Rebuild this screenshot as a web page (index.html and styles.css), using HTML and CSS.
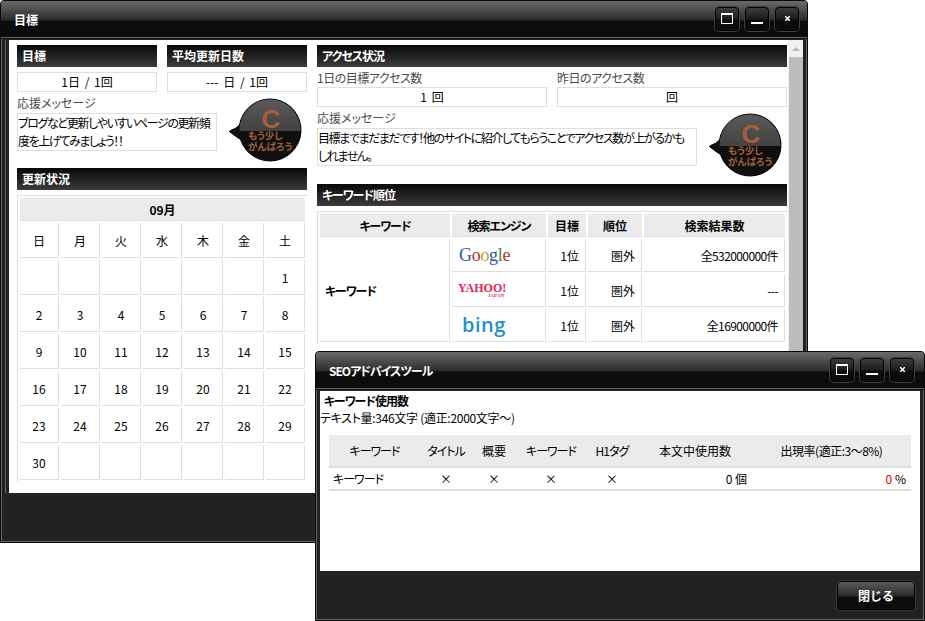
FILE: index.html
```html
<!DOCTYPE html>
<html lang="ja">
<head>
  <meta charset="UTF-8" />
  <meta name="viewport" content="width=device-width, initial-scale=1.0" />
  <title>目標</title>
  <link rel="stylesheet" href="styles.css">
</head>
<body>
  <div class="window window-goal">
    <div class="titlebar">
      <span class="titlebar-text">目標</span>
      <div class="window-buttons">
        <button class="win-btn"><span class="icon-max"></span></button>
        <button class="win-btn"><span class="icon-min"></span></button>
        <button class="win-btn"><svg class="icon-close" viewBox="0 0 5 5" width="5" height="5"><path d="M0 0L5 5M5 0L0 5" /></svg></button>
      </div>
    </div>
    <div class="goal-frame">
      <div class="goal-content">
        <div class="col-left">
          <div class="two-col">
            <div class="cell-140">
              <h2 class="section-head">目標</h2>
              <div class="value-box value-first">1日 / 1回</div>
            </div>
            <div class="cell-140">
              <h2 class="section-head">平均更新日数</h2>
              <div class="value-box value-first">--- 日 / 1回</div>
            </div>
          </div>

          <div class="cheer">
            <div class="cheer-left">
              <div class="label">応援メッセージ</div>
              <div class="message message-short">ブログなど更新しやいすいページの更新頻<br>度を上げてみましょう！！</div>
            </div>
            <svg class="bubble" viewBox="0 0 74 64" width="74" height="64">
              <defs>
                <linearGradient id="bubbleTop" x1="0" y1="0" x2="0" y2="1">
                  <stop offset="0" stop-color="#5a5a5a" />
                  <stop offset="1" stop-color="#2c2c2c" />
                </linearGradient>
                <clipPath id="bubbleUpper"><rect x="0" y="0" width="74" height="33" /></clipPath>
              </defs>
              <path d="M41 1a31 31 0 1 1-29.5 40.5Q6 38 1 34q-1-1 .5-1.500Q7 31 10.500 27A31 31 0 0 1 41 1z" fill="#0f0f0f" stroke="#000" />
              <circle cx="41" cy="32" r="30.500" fill="url(#bubbleTop)" clip-path="url(#bubbleUpper)" />
              <text class="bubble-c" x="42" y="30" text-anchor="middle">C</text>
              <text class="bubble-text" x="19" y="41">もう少し</text>
              <text class="bubble-text" x="19" y="52">がんばろう</text>
            </svg>
          </div>

          <h2 class="section-head head-calendar">更新状況</h2>
          <table class="grid-table calendar">
            <tr><th class="month" colspan="7">09月</th></tr>
            <tr><td>日</td><td>月</td><td>火</td><td>水</td><td>木</td><td>金</td><td>土</td></tr>
            <tr><td></td><td></td><td></td><td></td><td></td><td></td><td>1</td></tr>
            <tr><td>2</td><td>3</td><td>4</td><td>5</td><td>6</td><td>7</td><td>8</td></tr>
            <tr><td>9</td><td>10</td><td>11</td><td>12</td><td>13</td><td>14</td><td>15</td></tr>
            <tr><td>16</td><td>17</td><td>18</td><td>19</td><td>20</td><td>21</td><td>22</td></tr>
            <tr><td>23</td><td>24</td><td>25</td><td>26</td><td>27</td><td>28</td><td>29</td></tr>
            <tr><td>30</td><td></td><td></td><td></td><td></td><td></td><td></td></tr>
          </table>
        </div>

        <div class="col-right">
          <h2 class="section-head tight">アクセス状況</h2>
          <div class="two-col">
            <div class="cell-230">
              <div class="label label-access">1日の目標アクセス数</div>
              <div class="value-box">1 回</div>
            </div>
            <div class="cell-230">
              <div class="label label-access">昨日のアクセス数</div>
              <div class="value-box">回</div>
            </div>
          </div>

          <div class="cheer">
            <div class="cheer-left">
              <div class="label">応援メッセージ</div>
              <div class="message message-long">目標までまだまだです！他のサイトに紹介してもらうことでアクセス数が上がるかも<br>しれません。</div>
            </div>
            <svg class="bubble" viewBox="0 0 74 64" width="74" height="64">
              <path d="M41 1a31 31 0 1 1-29.5 40.5Q6 38 1 34q-1-1 .5-1.500Q7 31 10.500 27A31 31 0 0 1 41 1z" fill="#0f0f0f" stroke="#000" />
              <circle cx="41" cy="32" r="30.500" fill="url(#bubbleTop)" clip-path="url(#bubbleUpper)" />
              <text class="bubble-c" x="42" y="30" text-anchor="middle">C</text>
              <text class="bubble-text" x="19" y="41">もう少し</text>
              <text class="bubble-text" x="19" y="52">がんばろう</text>
            </svg>
          </div>

          <h2 class="section-head head-rank tight">キーワード順位</h2>
          <table class="grid-table rank">
            <colgroup>
              <col class="rank-c1"><col class="rank-c2"><col class="rank-c3"><col class="rank-c4"><col class="rank-c5">
            </colgroup>
            <tr><th class="tight">キーワード</th><th class="tight">検索エンジン</th><th>目標</th><th>順位</th><th>検索結果数</th></tr>
            <tr>
              <td class="keyword tight" rowspan="3">キーワード</td>
              <td class="logo logo-google"><span class="g-blue">G</span><span class="g-red">o</span><span class="g-yellow">o</span><span class="g-blue">g</span><span class="g-green">l</span><span class="g-red">e</span></td>
              <td class="right">1位</td><td class="right">圏外</td><td class="right num">全532000000件</td>
            </tr>
            <tr>
              <td class="logo logo-yahoo">YAHOO!<span class="yahoo-japan">JAPAN</span></td>
              <td class="right">1位</td><td class="right">圏外</td><td class="right num">---</td>
            </tr>
            <tr>
              <td class="logo logo-bing">bing</td>
              <td class="right">1位</td><td class="right">圏外</td><td class="right num">全16900000件</td>
            </tr>
          </table>
        </div>
      </div>
      <div class="scrollbar">
        <div class="scroll-arrow"></div>
        <div class="scroll-thumb"></div>
      </div>
    </div>
  </div>

  <div class="window window-seo">
    <div class="titlebar">
      <span class="titlebar-text tight">SEOアドバイスツール</span>
      <div class="window-buttons">
        <button class="win-btn"><span class="icon-max"></span></button>
        <button class="win-btn"><span class="icon-min"></span></button>
        <button class="win-btn"><svg class="icon-close" viewBox="0 0 5 5" width="5" height="5"><path d="M0 0L5 5M5 0L0 5" /></svg></button>
      </div>
    </div>
    <div class="seo-body">
      <h3 class="seo-head tight">キーワード使用数</h3>
      <p class="seo-count">テキスト量:346文字 (適正:2000文字～)</p>
      <table class="seo-table">
        <colgroup>
          <col class="seo-c1"><col class="seo-c2"><col class="seo-c3"><col class="seo-c4"><col class="seo-c5"><col class="seo-c6"><col class="seo-c7">
        </colgroup>
        <tr>
          <th class="tight">キーワード</th><th class="tight">タイトル</th><th>概要</th><th class="tight">キーワード</th><th class="tight">H1タグ</th><th>本文中使用数</th><th class="rate-head">出現率(適正:3～8%)</th>
        </tr>
        <tr>
          <td class="seo-keyword tight">キーワード</td><td>×</td><td>×</td><td>×</td><td>×</td>
          <td class="right">0 個</td><td class="right"><span class="zero">0</span> %</td>
        </tr>
      </table>
    </div>
    <div class="seo-footer">
      <button class="close-btn">閉じる</button>
    </div>
  </div>
</body>
</html>
```

FILE: styles.css
```css
:root {
  --line: #dedede;
  --head-bg: #ebebeb;
  --panel: #222;
}

* {
  box-sizing: border-box;
}

body {
  margin: 0;
  background: #fff;
  color: #000;
  font-family: "Noto Sans CJK JP", "Liberation Sans", sans-serif;
  font-size: 12px;
  font-feature-settings: "palt";
  overflow: hidden;
}

/* windows sit on a free desktop */
.window {
  position: absolute;
  background: var(--panel);
  border: 1px solid #0a0a0a;
  border-radius: 4px 4px 0 0;
  box-shadow: inset 0 0 0 1px #666;
  overflow: hidden;
}

.window-goal {
  left: 0;
  top: 0;
  width: 808px;
  height: 543px;
}

.window-seo {
  left: 315px;
  top: 351px;
  width: 610px;
  height: 270px;
  z-index: 2;
}

.titlebar {
  display: flex;
  align-items: center;
  justify-content: space-between;
  height: 38px;
  padding: 0 8px 0 13px;
  background: linear-gradient(#6a6a6a 0, #2b2b2b 19px, #0c0c0e 20px, #0c0c0e 36px, #666 36px, #666 37px, #111 37px);
}

.window-seo .titlebar {
  padding-right: 10px;
}

.titlebar-text {
  color: #fff;
  font-weight: bold;
  line-height: 36px;
  height: 36px;
}

.tight {
  letter-spacing: -1px;
}

.window-buttons {
  display: flex;
  gap: 6px;
  margin-top: -3px;
}

.win-btn {
  display: flex;
  align-items: center;
  justify-content: center;
  width: 24px;
  height: 24px;
  padding: 0;
  border: 1px solid #050505;
  border-radius: 4px;
  background: linear-gradient(#3c3c3c 0, #1c1c1c 11px, #0c0c0c 12px, #0c0c0c 100%);
  box-shadow: 0 0 0 1px #3f3f3f;
}

.icon-max {
  width: 12px;
  height: 11px;
  border: 1px solid #fff;
  border-top-width: 2px;
}

.icon-min {
  width: 12px;
  height: 2px;
  margin-top: 9px;
  background: #fff;
}

.icon-close {
  fill: none;
  stroke: #fff;
  stroke-width: 1.500;
}

/* goal window */
.goal-frame {
  display: flex;
  height: 453px;
  margin: 1px 4px 0 4px;
  padding-left: 3px;
  border-left: 1px solid #666;
}

.goal-content {
  display: flex;
  gap: 10px;
  width: 779px;
  padding: 5px 1px 0 8px;
  background: #fff;
  overflow: hidden;
}

.col-left {
  flex: none;
  width: 290px;
}

.col-right {
  flex: none;
  width: 470px;
}

.two-col {
  display: flex;
  gap: 10px;
}

.cell-140 {
  width: 140px;
}

.cell-230 {
  width: 230px;
}

.section-head {
  height: 22px;
  margin: 0;
  padding-left: 5px;
  background: linear-gradient(#080808, #3c3c3c);
  color: #fff;
  font-size: 12px;
  font-weight: bold;
  line-height: 22px;
}

.head-calendar {
  margin-top: 6px;
}

.head-rank {
  margin-top: 7px;
}

.value-box {
  height: 20px;
  border: 1px solid var(--line);
  line-height: 18px;
  text-align: center;
  word-spacing: 2px;
}

.value-first {
  margin-top: 5px;
}

.label {
  height: 18px;
  margin-top: 3px;
  padding-bottom: 2px;
  color: #4a4a4a;
  line-height: 16px;
}

.label-access {
  height: 17px;
  padding-bottom: 1px;
  letter-spacing: -0.5px;
}

.cheer {
  display: flex;
  align-items: flex-start;
}

.message {
  height: 38px;
  padding: 0;
  border: 1px solid var(--line);
  letter-spacing: -1.400px;
  line-height: 18px;
  white-space: nowrap;
}

.message-short {
  width: 200px;
}

.message-long {
  width: 380px;
}

.bubble {
  flex: none;
  margin: 6px 0 0 12px;
}

.bubble-c {
  fill: #a5603a;
  font: bold 26px "Liberation Sans", sans-serif;
}

.bubble-text {
  fill: #a8623c;
  font-size: 9.500px;
  font-weight: bold;
}

.grid-table {
  margin-top: 5px;
  border-top: 1px solid var(--line);
  border-left: 1px solid var(--line);
  border-collapse: separate;
  border-spacing: 2px;
  table-layout: fixed;
}

.grid-table th {
  padding: 0;
  height: 23px;
  background: var(--head-bg);
  border-bottom: 1px solid var(--line);
  font-weight: bold;
}

.grid-table td {
  padding: 0;
  height: 35px;
  border-right: 1px solid var(--line);
  border-bottom: 1px solid var(--line);
  text-align: center;
}

.calendar {
  width: 290px;
}

.rank {
  width: 470px;
}

.rank-c1 { width: 130px; }
.rank-c2 { width: 94px; }
.rank-c3 { width: 38px; }
.rank-c4 { width: 54px; }
.rank-c5 { width: 141px; }

.rank tr + tr td {
  height: 33px;
}

.rank .keyword {
  padding-left: 5px;
  font-weight: bold;
  text-align: left;
}

.rank .right {
  padding-right: 6px;
  text-align: right;
}

.num {
  letter-spacing: -0.6px;
}

.rank .logo {
  text-align: left;
  white-space: nowrap;
}

.rank .logo-google {
  padding-left: 7px;
  font: 18px/20px "Liberation Serif", serif;
  letter-spacing: -0.3px;
}

.g-blue { color: #2a55b4; }
.g-red { color: #b8322a; }
.g-yellow { color: #cf9c1e; }
.g-green { color: #3a8a3c; }

.rank .logo-yahoo {
  position: relative;
  padding: 0 0 5px 6px;
  color: #ea2350;
  font: bold 12px/14px "Liberation Serif", serif;
}

.yahoo-japan {
  position: absolute;
  left: 36px;
  bottom: 8px;
  font-size: 5px;
  line-height: 5px;
}

.rank .logo-bing {
  padding-left: 10px;
  color: #1e90d2;
  font: 600 20px/22px "Open Sans", sans-serif;
  letter-spacing: 0.5px;
}

.scrollbar {
  flex: none;
  width: 15px;
  padding-top: 7px;
  background: #f0f0f0;
}

.scroll-arrow {
  width: 0;
  height: 0;
  margin: 0 auto;
  border-left: 4px solid transparent;
  border-right: 4px solid transparent;
  border-bottom: 4px solid #bbb;
}

.scroll-thumb {
  height: 435px;
  margin: 6px 0 0 1px;
  background: #bdbdbd;
}

/* seo window */
.seo-body {
  height: 180px;
  margin: 1px 4px 0;
  padding-top: 2px;
  background: #fff;
}

.seo-head {
  height: 16px;
  margin: 0;
  padding-left: 4px;
  font-size: 12px;
  font-weight: bold;
  line-height: 16px;
}

.seo-count {
  height: 16px;
  margin: 1px 0 0;
  letter-spacing: -0.3px;
  line-height: 16px;
}

.seo-table {
  width: 582px;
  margin: 9px 0 0 9px;
  border-collapse: collapse;
  table-layout: fixed;
}

.seo-c1 { width: 91px; }
.seo-c2 { width: 52px; }
.seo-c3 { width: 44px; }
.seo-c4 { width: 70px; }
.seo-c5 { width: 52px; }
.seo-c6 { width: 114px; }
.seo-c7 { width: 159px; }

.seo-table th {
  height: 32px;
  padding: 0;
  background: var(--head-bg);
  border-bottom: 2px solid var(--line);
  font-weight: normal;
}

.seo-table .rate-head {
  letter-spacing: -0.5px;
}

.seo-table td {
  height: 23px;
  padding: 0;
  border-bottom: 2px solid var(--line);
  text-align: center;
}

.seo-table .seo-keyword {
  padding-left: 4px;
  text-align: left;
}

.seo-table .right {
  padding-right: 5px;
  text-align: right;
}

.zero {
  color: #e00;
}

.seo-footer {
  display: flex;
  justify-content: flex-end;
  padding: 10px 9px 0 0;
}

.close-btn {
  width: 78px;
  height: 29px;
  padding: 0;
  border: 1px solid #050505;
  border-radius: 4px;
  background: linear-gradient(#5a5a5a 0, #2a2a2a 14px, #0c0c0c 15px, #0c0c0c 100%);
  box-shadow: 0 0 0 1px #333;
  color: #fff;
  font-family: inherit;
  font-size: 12px;
  font-weight: bold;
}
```
